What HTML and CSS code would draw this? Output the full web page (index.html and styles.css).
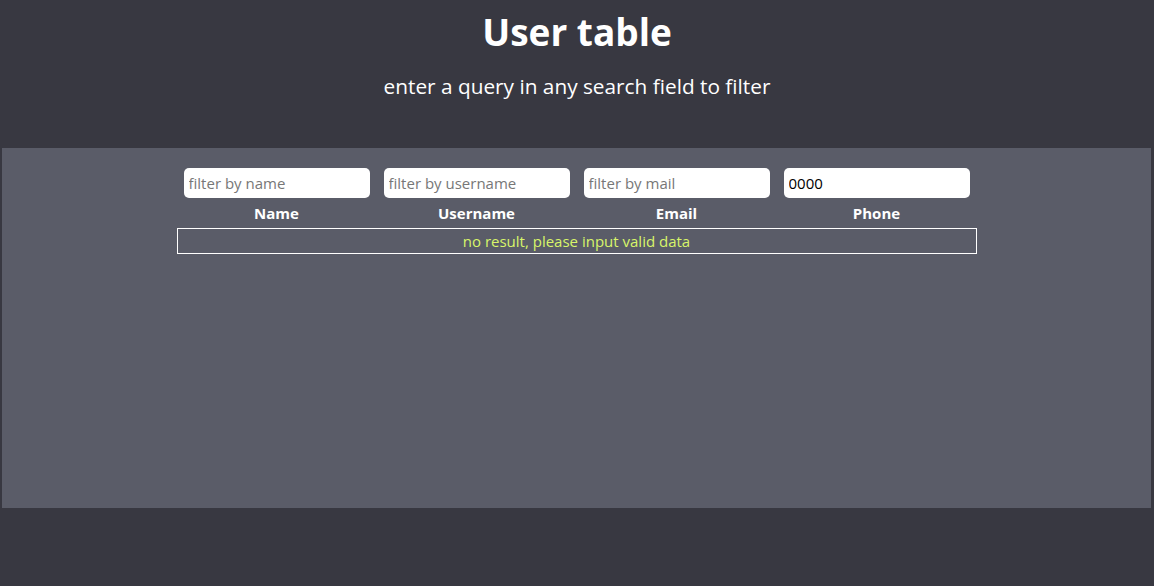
FILE: index.html
```html
<!DOCTYPE html>
<html>
<head>
<meta charset="utf-8">
<link rel="stylesheet" href="styles.css">
</head>
<body>
<header class="header">
  <h1 class="title">User table</h1>
  <p class="subtitle">enter a query in any search field to filter</p>
</header>
<main class="panel">
  <div class="table">
    <div class="filters">
      <div class="cell"><input class="search" placeholder="filter by name"></div>
      <div class="cell"><input class="search" placeholder="filter by username"></div>
      <div class="cell"><input class="search" placeholder="filter by mail"></div>
      <div class="cell"><input class="search" placeholder="filter by phone" value="0000"></div>
    </div>
    <div class="heads">
      <div class="head">Name</div>
      <div class="head">Username</div>
      <div class="head">Email</div>
      <div class="head">Phone</div>
    </div>
    <div class="empty">no result, please input valid data</div>
  </div>
</main>
</body>
</html>
```
FILE: styles.css
```css
html, body {
  margin: 0;
  padding: 0;
}
body {
  background: #383841;
  font-family: "Open Sans", "Noto Sans", sans-serif;
  color: #fff;
  height: 586px;
}
.header {
  text-align: center;
  padding-top: 7px;
  height: 138px;
  box-sizing: border-box;
}
.title {
  margin: 0;
  font-size: 37px;
  font-weight: 700;
  line-height: 50px;
}
.subtitle {
  margin: 14px 0 0;
  font-size: 20.8px;
  line-height: 30px;
}
.panel {
  background: #5a5c68;
  margin: 10px 3px 0 2px;
  height: 360px;
  padding-top: 20px;
  box-sizing: border-box;
}
.table {
  width: 800px;
  margin: 0 auto;
}
.filters, .heads {
  display: grid;
  grid-template-columns: repeat(4, 200px);
}
.cell {
  display: flex;
  justify-content: center;
}
.search {
  width: 186px;
  height: 30px;
  box-sizing: border-box;
  border: none;
  border-radius: 5px;
  background: #fff;
  padding: 0 5px;
  font-family: inherit;
  font-size: 15px;
  color: #000;
  outline: none;
}
.search::placeholder {
  color: #777;
}
.heads {
  height: 30px;
  align-items: center;
}
.head {
  text-align: center;
  font-weight: 700;
  font-size: 15px;
}
.empty {
  border: 1px solid #fff;
  height: 26px;
  box-sizing: border-box;
  text-align: center;
  color: #d8f56a;
  font-size: 15px;
  line-height: 24px;
}
```
